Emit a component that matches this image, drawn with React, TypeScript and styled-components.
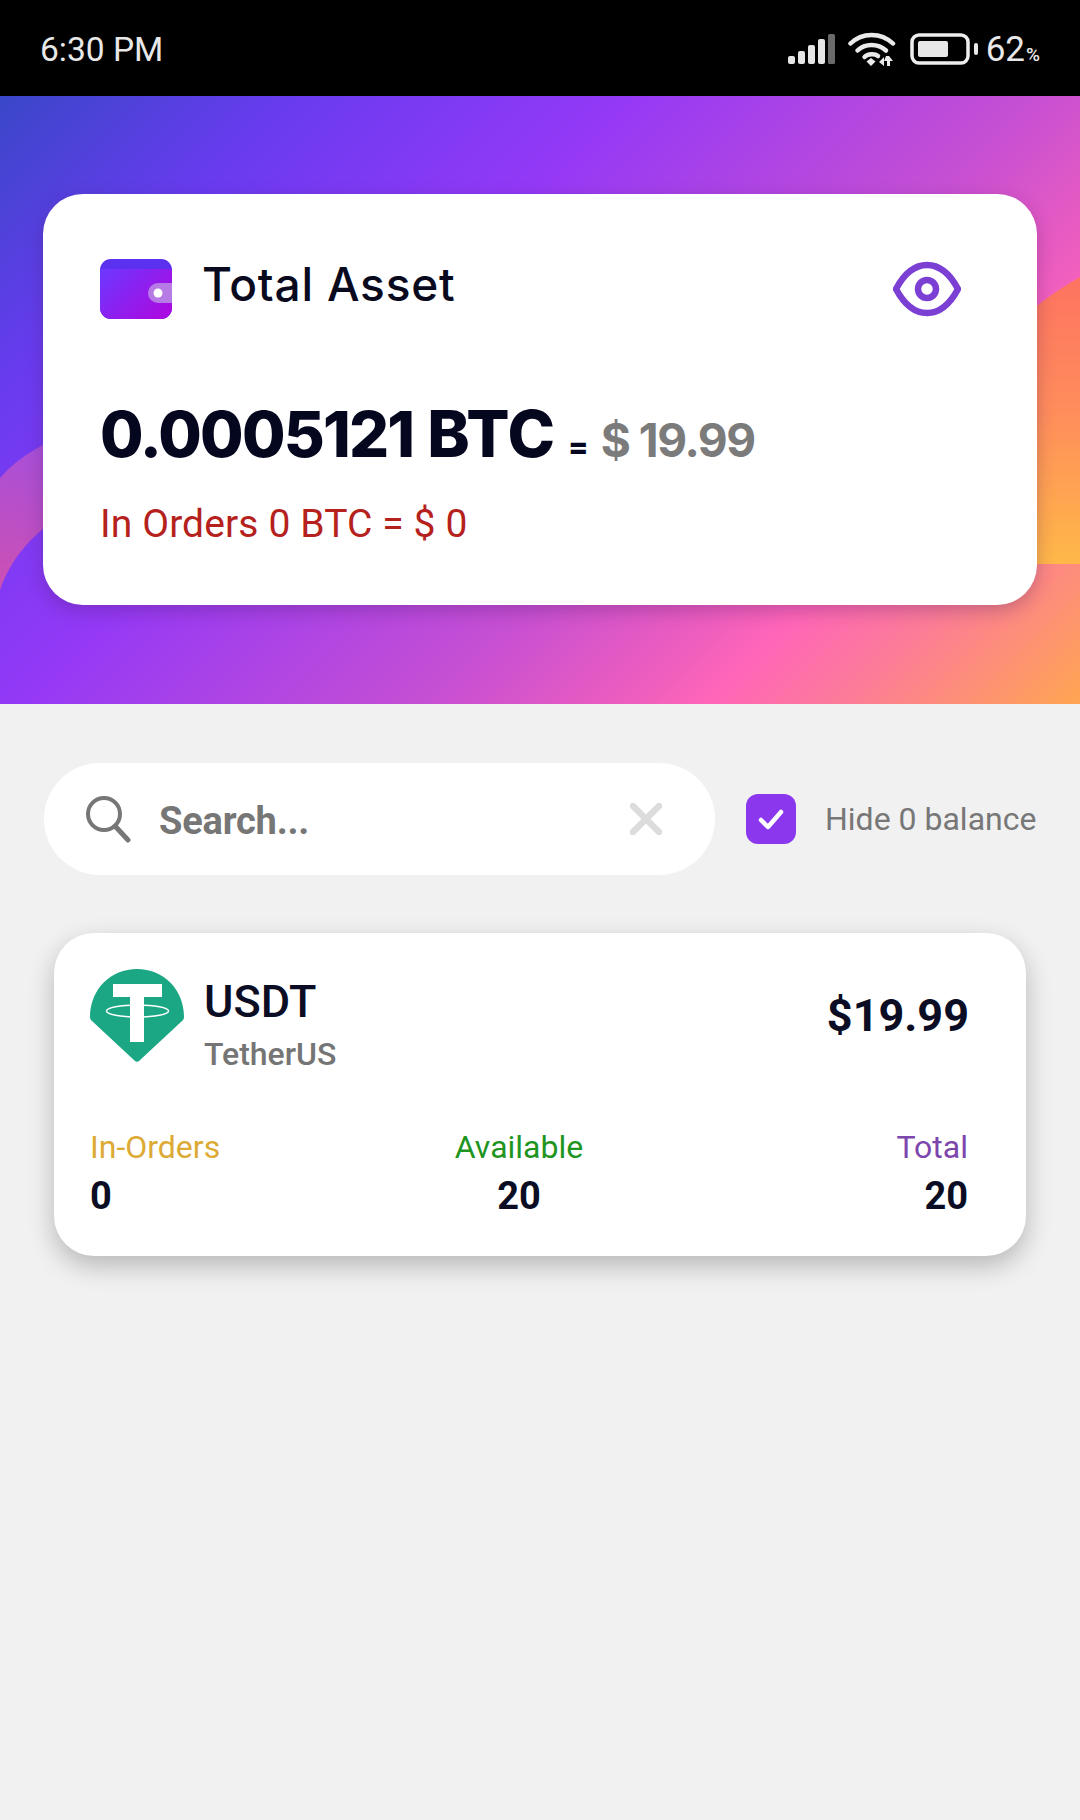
import React from "react";
import styled, { createGlobalStyle } from "styled-components";

const Global = createGlobalStyle`
  html, body { margin: 0; padding: 0; background: #f1f1f1; }
  * { box-sizing: border-box; }
`;

const Screen = styled.div`
  width: 1080px;
  height: 1820px;
  background: #f1f1f1;
  font-family: Roboto, "Liberation Sans", sans-serif;
  overflow: hidden;
`;

const StatusBar = styled.header`
  height: 96px;
  background: #000;
  color: #e8e8e8;
  display: flex;
  align-items: center;
  padding: 2px 40px 0 40px;
`;

const Clock = styled.span`
  font-size: 33.5px;
  flex: 1;
`;

const StatusIcons = styled.div`
  display: flex;
  align-items: center;
  gap: 11px;
`;

const Percent = styled.span`
  font-size: 35px;
  margin-left: -5px;
  small { font-size: 19px; margin-left: 1px; font-weight: 500; }
`;

const Hero = styled.section`
  position: relative;
  height: 608px;
  padding: 98px 43px 0;
  overflow: hidden;
`;

const HeroArt = styled.svg`
  position: absolute;
  inset: 0;
  width: 100%;
  height: 100%;
`;

const AssetCard = styled.div`
  position: relative;
  height: 411px;
  background: #fff;
  border-radius: 40px;
  box-shadow: 0 6px 18px rgba(70, 20, 90, 0.28);
  padding: 65px 76px 0 57px;
`;

const AssetHead = styled.div`
  display: flex;
  align-items: flex-start;
`;

const AssetTitle = styled.h2`
  margin: 0 0 0 30px;
  flex: 1;
  font: 500 46px/50px Inter, sans-serif;
  color: #0a0a1e;
  letter-spacing: 0.8px;
`;

const EyeMark = styled.svg`
  width: 68px;
  height: 56px;
  margin-top: 2px;
`;

const AmountRow = styled.div`
  display: flex;
  align-items: baseline;
  margin-top: 78px;
  font-family: Inter, sans-serif;
  font-weight: 800;
`;

const Amount = styled.span`
  font-size: 63px;
  line-height: 74px;
  color: #05071f;
  letter-spacing: -1.8px;
  word-spacing: 2px;
`;

const AmountUnit = styled.span`
  font-size: 64px;
  letter-spacing: 0;
`;

const Equals = styled.span`
  font-size: 30px;
  color: #05071f;
  margin: 0 12px 0 13px;
`;

const Fiat = styled.span`
  font-size: 46px;
  font-weight: 700;
  color: #7b7b7b;
  letter-spacing: -1.4px;
`;

const InOrders = styled.p`
  margin: 31px 0 0;
  font-size: 39px;
  line-height: 44px;
  letter-spacing: 0.12px;
  color: #b5211c;
`;

const Filters = styled.div`
  display: flex;
  align-items: center;
  margin: 59px 43px 0 44px;
`;

const SearchBox = styled.div`
  width: 671px;
  height: 112px;
  border-radius: 56px;
  background: #fff;
  display: flex;
  align-items: center;
  padding: 0 53px 0 40px;
`;

const SearchText = styled.span`
  flex: 1;
  margin: 4px 0 0 27px;
  font-size: 38px;
  font-weight: 700;
  letter-spacing: -0.2px;
  color: #767676;
`;

const CheckBox = styled.span`
  width: 50px;
  height: 50px;
  margin-left: 31px;
  border-radius: 12px;
  background: #8a37ee;
  display: flex;
  align-items: center;
  justify-content: center;
`;

const CheckLabel = styled.span`
  margin-left: 29px;
  font-size: 32px;
  color: #777;
  white-space: nowrap;
`;

const CoinCard = styled.article`
  width: 972px;
  height: 323px;
  margin: 58px 0 0 54px;
  border-radius: 40px;
  background: #fff;
  box-shadow: 0 10px 26px rgba(0, 0, 0, 0.24);
  padding: 36px 58px 0 36px;
`;

const CoinHead = styled.div`
  display: flex;
  align-items: flex-start;
`;

const CoinName = styled.div`
  flex: 1;
  margin-left: 20px;
  padding-top: 7px;
`;

const Symbol = styled.div`
  font-size: 45px;
  line-height: 52px;
  font-weight: 500;
  color: #0b0d24;
`;

const FullName = styled.div`
  margin-top: 7px;
  font-size: 32px;
  line-height: 38px;
  font-weight: 500;
  color: #757575;
`;

const CoinValue = styled.div`
  font-size: 45px;
  line-height: 52px;
  font-weight: 700;
  color: #0b0d24;
  margin: 21px -1px 0 0;
`;

const Stats = styled.div`
  display: grid;
  grid-template-columns: 340px 178px 1fr;
  margin-top: 55px;
`;

const Stat = styled.div<{ $align: "left" | "center" | "right" }>`
  text-align: ${(p) => p.$align};
`;

const StatLabel = styled.div<{ $color: string }>`
  font-size: 32px;
  line-height: 38px;
  white-space: nowrap;
  color: ${(p) => p.$color};
`;

const StatValue = styled.div`
  margin-top: 7px;
  font-size: 38px;
  line-height: 46px;
  font-weight: 700;
  color: #0b0d24;
`;

const BatteryFrame = styled.svg`
  margin-left: 3px;
`;

const SignalIcon = () => (
  <svg width="50" height="32" viewBox="0 0 50 32">
    <g fill="#e6e6e6">
      <rect x="1" y="23" width="7" height="8" rx="2" />
      <rect x="11" y="18" width="7" height="13" rx="2" />
      <rect x="21" y="12" width="7" height="19" rx="2" />
      <rect x="31" y="6" width="7" height="25" rx="2" />
    </g>
    <rect x="41" y="1" width="7" height="30" rx="1.5" fill="#6a6a6a" />
  </svg>
);

const WifiIcon = () => (
  <svg width="48" height="36" viewBox="0 0 48 36">
    <g fill="none" stroke="#eaeaea" strokeWidth="4.5" strokeLinecap="round">
      <path d="M2.5 12.5C14 1 33 1 45 12.5" />
      <path d="M9.5 19.5C17 12 30 12 38 19.5" />
      <path d="M16.5 26C20 22.5 27 22.5 30 25" />
    </g>
    <path d="M18.5 30.5L23 27l4.500 3.500L23 35z" fill="#eaeaea" />
    <path d="M31 31l5-5v9zM38 25h3l4 5h-3v5h-3v-5h-3z" fill="#eaeaea" />
  </svg>
);

const BatteryIcon = () => (
  <BatteryFrame width="70" height="32" viewBox="0 0 70 32">
    <rect x="2" y="2" width="56" height="28" rx="7" fill="none" stroke="#eee" strokeWidth="3.500" />
    <rect x="8" y="8" width="30" height="16" rx="2" fill="#e8e8e8" />
    <rect x="64" y="10" width="4" height="12" rx="2" fill="#e8e8e8" />
  </BatteryFrame>
);

/* Diagonal sweep with the two soft shapes that peek out beside the card. */
const HeroBackdrop = () => (
  <HeroArt viewBox="0 0 1080 608" preserveAspectRatio="none">
    <defs>
      <linearGradient id="sweep" gradientUnits="userSpaceOnUse" x1="0" y1="0" x2="844" y2="844">
        <stop offset="0" stopColor="#3a47c9" />
        <stop offset="0.18" stopColor="#6a3bf0" />
        <stop offset="0.37" stopColor="#9439f6" />
        <stop offset="0.62" stopColor="#c850d2" />
        <stop offset="0.72" stopColor="#ea5cc0" />
        <stop offset="0.78" stopColor="#ff66b8" />
        <stop offset="0.86" stopColor="#fc7c98" />
        <stop offset="1" stopColor="#ffa552" />
      </linearGradient>
      <linearGradient id="flare" gradientUnits="userSpaceOnUse" x1="1060" y1="190" x2="1060" y2="468">
        <stop offset="0" stopColor="#fd7560" />
        <stop offset="0.45" stopColor="#ff8d5c" />
        <stop offset="1" stopColor="#ffb848" />
      </linearGradient>
      <linearGradient id="petal" gradientUnits="userSpaceOnUse" x1="40" y1="340" x2="0" y2="490">
        <stop offset="0" stopColor="#a64fdc" />
        <stop offset="1" stopColor="#cc50b4" />
      </linearGradient>
    </defs>
    <rect width="1080" height="608" fill="url(#sweep)" />
    <path d="M1080 181C1050 198 1030 215 1000 240V468H1080z" fill="url(#flare)" />
    <path d="M0 382C15 365 30 355 60 340V420C30 440 10 465 0 494z" fill="url(#petal)" />
  </HeroArt>
);

const WalletIcon = () => (
  <svg width="72" height="60" viewBox="0 0 72 60">
    <defs>
      <linearGradient id="walletFill" x1="0" y1="0" x2="1" y2="0.7">
        <stop offset="0" stopColor="#6c38ff" />
        <stop offset="1" stopColor="#a80ce2" />
      </linearGradient>
    </defs>
    <rect width="72" height="60" rx="11" fill="#5b30ee" />
    <path d="M0 10h72v39a11 11 0 0 1-11 11H11A11 11 0 0 1 0 49z" fill="url(#walletFill)" />
    <path d="M72 24H58a10 10 0 0 0 0 20h14z" fill="#b77be6" />
    <circle cx="58" cy="34" r="4.500" fill="#fff" />
  </svg>
);

const TetherIcon = () => (
  <svg width="94" height="94" viewBox="0 0 94 94">
    <path d="M47 0C73 0 94 20 94 48C94 50 93 51 92 52L49 92C48 93 46 93 45 92L2 52C1 51 0 50 0 48C0 20 21 0 47 0z" fill="#1ba783" />
    <path d="M23 15H72V28H54V73H40V28H23z" fill="#fff" />
    <ellipse cx="47.500" cy="42" rx="31" ry="6" fill="none" stroke="#fff" strokeWidth="1.500" />
  </svg>
);

const stats = [
  { label: "In-Orders", value: "0", color: "#dcaa35", align: "left" as const },
  { label: "Available", value: "20", color: "#1f951f", align: "center" as const },
  { label: "Total", value: "20", color: "#7d46ad", align: "right" as const },
];

export default function App() {
  return (
    <Screen>
      <Global />
      <StatusBar>
        <Clock>6:30 PM</Clock>
        <StatusIcons>
          <SignalIcon />
          <WifiIcon />
          <BatteryIcon />
          <Percent>
            62<small>%</small>
          </Percent>
        </StatusIcons>
      </StatusBar>

      <Hero>
        <HeroBackdrop />
        <AssetCard>
          <AssetHead>
            <WalletIcon />
            <AssetTitle>Total Asset</AssetTitle>
            <EyeMark viewBox="0 0 68 56">
              <path
                d="M3 28C11 13 22 4 34 4C46 4 57 13 65 28C57 43 46 52 34 52C22 52 11 43 3 28z"
                fill="none"
                stroke="#7c3fd4"
                strokeWidth="6.500"
                strokeLinejoin="round"
              />
              <circle cx="34" cy="28" r="9" fill="none" stroke="#7c3fd4" strokeWidth="6.500" />
            </EyeMark>
          </AssetHead>
          <AmountRow>
            <Amount>
              0.0005121 <AmountUnit>BTC</AmountUnit>
            </Amount>
            <Equals>=</Equals>
            <Fiat>$ 19.99</Fiat>
          </AmountRow>
          <InOrders>In Orders 0 BTC = $ 0</InOrders>
        </AssetCard>
      </Hero>

      <Filters>
        <SearchBox>
          <svg width="48" height="48" viewBox="0 0 48 48">
            <circle cx="20" cy="19" r="16" fill="none" stroke="#777" strokeWidth="4" />
            <path d="M31 31L44 45" stroke="#777" strokeWidth="5" strokeLinecap="round" />
          </svg>
          <SearchText>Search...</SearchText>
          <svg width="32" height="32" viewBox="0 0 32 32">
            <path d="M3 3L29 29M29 3L3 29" stroke="#dcdcdc" strokeWidth="6.500" strokeLinecap="round" />
          </svg>
        </SearchBox>
        <CheckBox>
          <svg width="28" height="24" viewBox="0 0 28 24">
            <path d="M4 13L11 20L24 5" fill="none" stroke="#fff" strokeWidth="4.500" strokeLinecap="round" strokeLinejoin="round" />
          </svg>
        </CheckBox>
        <CheckLabel>Hide 0 balance</CheckLabel>
      </Filters>

      <CoinCard>
        <CoinHead>
          <TetherIcon />
          <CoinName>
            <Symbol>USDT</Symbol>
            <FullName>TetherUS</FullName>
          </CoinName>
          <CoinValue>$19.99</CoinValue>
        </CoinHead>
        <Stats>
          {stats.map((s) => (
            <Stat key={s.label} $align={s.align}>
              <StatLabel $color={s.color}>{s.label}</StatLabel>
              <StatValue>{s.value}</StatValue>
            </Stat>
          ))}
        </Stats>
      </CoinCard>
    </Screen>
  );
}
